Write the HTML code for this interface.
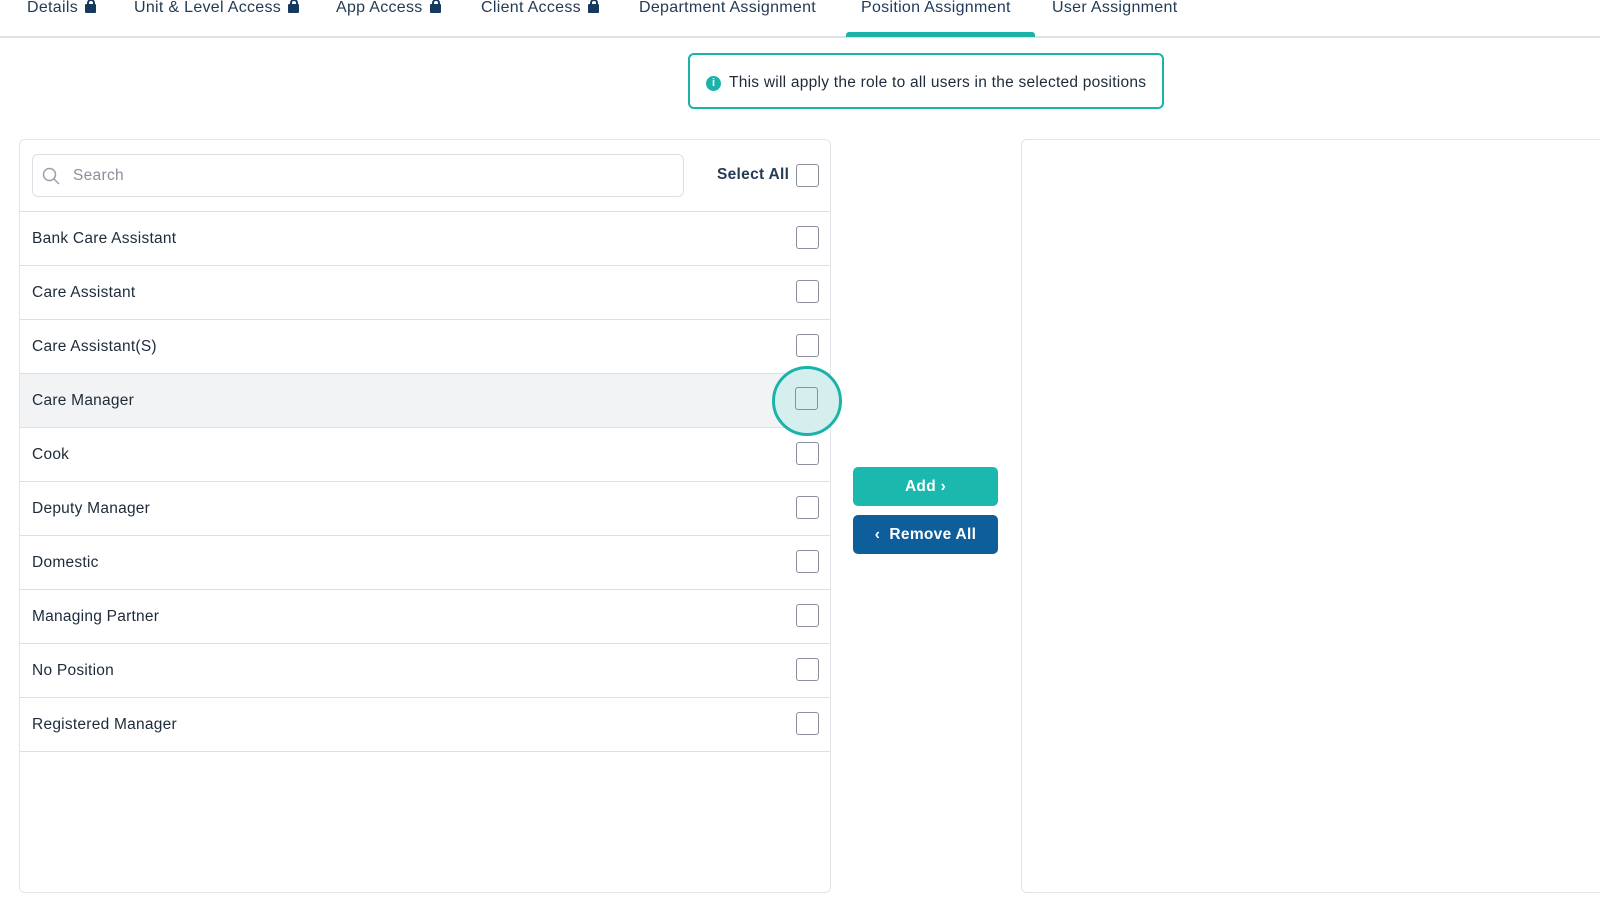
<!DOCTYPE html>
<html><head><style>
body{margin:0;width:1600px;height:899px;overflow:hidden;background:#fff;font-family:"Liberation Sans",sans-serif;color:#1d2b3a;position:relative}
.tab{position:absolute;top:-1px;font-size:16px;letter-spacing:0.3px;color:#243b55;white-space:nowrap}
.lock{display:inline-block;width:11px;height:9px;background:#163a5f;border-radius:1px;margin-left:7px;position:relative;vertical-align:-1px}
.lock:before{content:"";position:absolute;left:2px;top:-5px;width:4px;height:5px;border:2px solid #163a5f;border-bottom:none;border-radius:4px 4px 0 0}
.panel{position:absolute;border:1px solid #e2e4ea;border-radius:6px;background:#fff}
.row{position:absolute;left:0;width:811px;height:53px;border-top:1.5px solid #dcdfe5;font-size:15.5px;letter-spacing:0.25px;line-height:53px}
.row span{position:absolute;left:12px}
.cb{position:absolute;width:23px;height:23px;border:1.5px solid #8a8f99;border-radius:3px;box-sizing:border-box;background:#fff}
</style></head><body>
<div class="tab" style="left:27px">Details<span class="lock"></span></div>
<div class="tab" style="left:134px">Unit &amp; Level Access<span class="lock"></span></div>
<div class="tab" style="left:336px">App Access<span class="lock"></span></div>
<div class="tab" style="left:481px">Client Access<span class="lock"></span></div>
<div class="tab" style="left:639px">Department Assignment</div>
<div class="tab" style="left:861px;color:#1d3a5c">Position Assignment</div>
<div class="tab" style="left:1052px">User Assignment</div>
<div style="position:absolute;left:0;top:36px;width:1600px;height:2px;background:#dfe1e6"></div>
<div style="position:absolute;left:846px;top:32px;width:189px;height:5px;background:#1bb3a9;border-radius:3px 3px 0 0"></div>

<div style="position:absolute;left:688px;top:53px;width:472px;height:52px;border:2px solid #1bb3a9;border-radius:6px;font-size:15.5px;letter-spacing:0.25px;line-height:56px;color:#1d2b3a">
<span style="position:absolute;left:16px;top:21px;width:15px;height:15px;border-radius:50%;background:#1bb3a9;color:#fff;font-size:11px;line-height:15px;text-align:center;font-weight:bold;letter-spacing:0">i</span>
<span style="position:absolute;left:39px">This will apply the role to all users in the selected positions</span></div>

<div class="panel" style="left:19px;top:139px;width:810px;height:752px">
<div style="position:absolute;left:12px;top:14px;width:650px;height:41px;border:1px solid #dcdfe5;border-radius:6px">
<svg style="position:absolute;left:9px;top:12px" width="18" height="18" viewBox="0 0 18 18"><circle cx="7.5" cy="7.5" r="6" fill="none" stroke="#9aa0aa" stroke-width="1.5"/><line x1="12" y1="12" x2="17" y2="17" stroke="#9aa0aa" stroke-width="1.5"/></svg>
<span style="position:absolute;left:40px;top:12px;font-size:15.5px;letter-spacing:0.3px;color:#8a8f99">Search</span></div>
<span style="position:absolute;left:697px;top:26px;font-size:15.5px;letter-spacing:0.3px;font-weight:bold;color:#243b55">Select All</span>
<div class="cb" style="left:776px;top:24px"></div>
<div class="row" style="top:71px"><span>Bank Care Assistant</span></div>
<div class="row" style="top:125px"><span>Care Assistant</span></div>
<div class="row" style="top:179px"><span>Care Assistant(S)</span></div>
<div class="row" style="top:233px;background:#f2f3f5"><span>Care Manager</span></div>
<div class="row" style="top:287px"><span>Cook</span></div>
<div class="row" style="top:341px"><span>Deputy Manager</span></div>
<div class="row" style="top:395px"><span>Domestic</span></div>
<div class="row" style="top:449px"><span>Managing Partner</span></div>
<div class="row" style="top:503px"><span>No Position</span></div>
<div class="row" style="top:557px;border-bottom:1.5px solid #dcdfe5"><span>Registered Manager</span></div>
<div class="cb" style="left:776px;top:86px"></div>
<div class="cb" style="left:776px;top:140px"></div>
<div class="cb" style="left:776px;top:194px"></div>
<div class="cb" style="left:776px;top:302px"></div>
<div class="cb" style="left:776px;top:356px"></div>
<div class="cb" style="left:776px;top:410px"></div>
<div class="cb" style="left:776px;top:464px"></div>
<div class="cb" style="left:776px;top:518px"></div>
<div class="cb" style="left:776px;top:572px"></div>
</div>
<div style="position:absolute;left:772px;top:366px;width:64px;height:64px;border:3px solid #1bb3a9;border-radius:50%;background:#d5eeee"></div>
<div class="cb" style="left:795px;top:387px;background:#d5eeee"></div>

<div style="position:absolute;left:853px;top:467px;width:145px;height:39px;background:#1bb8ae;border-radius:5px;color:#fff;font-weight:bold;font-size:15.5px;letter-spacing:0.3px;line-height:39px;text-align:center">Add ›</div>
<div style="position:absolute;left:853px;top:515px;width:145px;height:39px;background:#0d5e9a;border-radius:5px;color:#fff;font-weight:bold;font-size:15.5px;letter-spacing:0.3px;line-height:39px;text-align:center">‹&nbsp;&nbsp;Remove All</div>

<div class="panel" style="left:1021px;top:139px;width:640px;height:752px"></div>
</body></html>
